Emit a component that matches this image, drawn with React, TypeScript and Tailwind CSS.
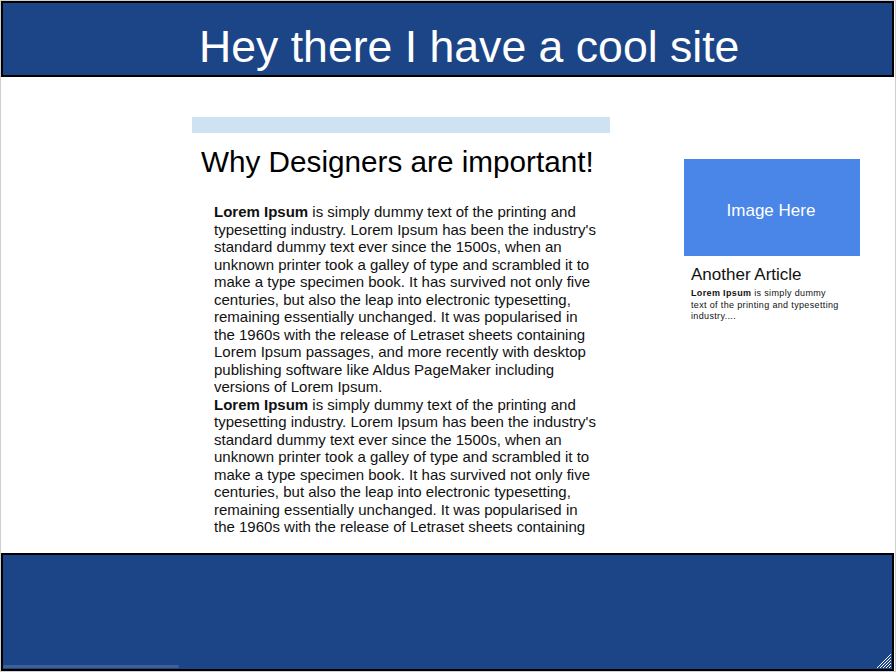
const para =
  " is simply dummy text of the printing and typesetting industry. Lorem Ipsum has been the industry's standard dummy text ever since the 1500s, when an unknown printer took a galley of type and scrambled it to make a type specimen book. It has survived not only five centuries, but also the leap into electronic typesetting, remaining essentially unchanged. It was popularised in the 1960s with the release of Letraset sheets containing Lorem Ipsum passages, and more recently with desktop publishing software like Aldus PageMaker including versions of Lorem Ipsum.";

function ResizeHandle() {
  return (
    <svg width="16" height="16" viewBox="0 0 16 16" className="absolute right-0 bottom-0">
      <g stroke="#ffffff" strokeWidth="1">
        <line x1="15" y1="1" x2="1" y2="15" />
        <line x1="15" y1="4" x2="4" y2="15" />
        <line x1="15" y1="7" x2="7" y2="15" />
        <line x1="15" y1="10" x2="10" y2="15" />
        <line x1="15" y1="13" x2="13" y2="15" />
      </g>
    </svg>
  );
}

export default function App() {
  return (
    <div
      className="w-[896px] h-[672px] border border-[#cfcfcf] bg-white flex flex-col overflow-hidden"
      style={{ fontFamily: '"Liberation Sans", Arial, sans-serif' }}
    >
      {/* Header */}
      <header className="w-[893px] h-[76px] shrink-0 border-2 border-black bg-[#1c4587]">
        <h1 className="pl-[196px] pt-[19px] text-[44.6px] leading-[50px] text-white">
          Hey there I have a cool site
        </h1>
      </header>

      {/* Main */}
      <main className="h-[476px] shrink-0 flex pl-[191px]">
        <section className="w-[418px] h-[460px] overflow-hidden">
          <div className="mt-[40px] h-[16px] bg-[#cfe2f3]" />
          <h2 className="mt-[12px] pl-[9px] text-[29.7px] leading-[34px] text-black">
            Why Designers are important!
          </h2>
          <div className="mt-[24px] pl-[22px] w-[410px] text-[15px] leading-[17.5px] text-[#111]">
            <p>
              <b>Lorem Ipsum</b>
              {para}
            </p>
            <p>
              <b>Lorem Ipsum</b>
              {para}
            </p>
          </div>
        </section>

        <aside className="ml-[74px] w-[176px] mt-[82px]">
          <div className="h-[97px] bg-[#4a86e8] flex items-center justify-center pt-[7px] pr-[2px] text-[17px] text-white">
            Image Here
          </div>
          <h3 className="mt-[9px] pl-[7px] text-[17px] leading-[20px] text-[#111]">
            Another Article
          </h3>
          <p className="mt-[3px] pl-[7px] w-[160px] text-[9px] leading-[11.5px] tracking-[0.35px] text-[#111]">
            <b>Lorem Ipsum</b> is simply dummy text of the printing and typesetting industry....
          </p>
        </aside>
      </main>

      {/* Footer */}
      <footer className="relative w-[893px] flex-1 border-2 border-black bg-[#1c4587]">
        <div className="absolute left-0 bottom-[1px] w-[176px] h-[3px] rounded-full bg-white/15" />
        <ResizeHandle />
      </footer>
    </div>
  );
}
